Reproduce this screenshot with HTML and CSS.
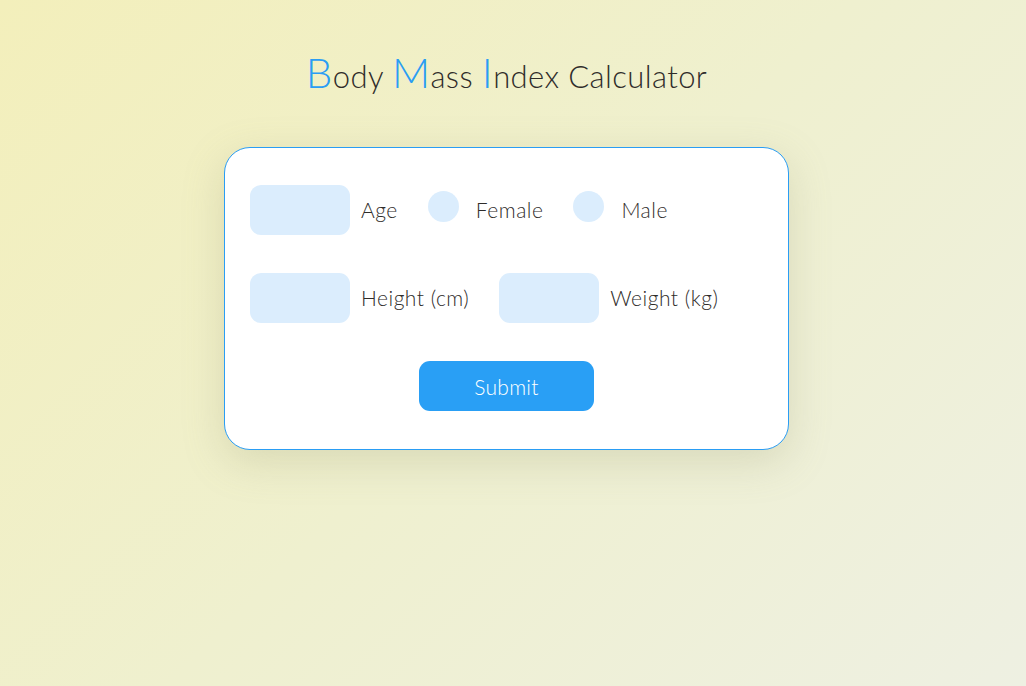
FILE: index.html
```html
<!DOCTYPE html>
<html lang="en">
<head>
<meta charset="utf-8">
<title>Body Mass Index Calculator</title>
<link rel="stylesheet" href="styles.css">
</head>
<body>
<main class="page">
  <h1 class="title"><span class="initial">B</span>ody <span class="initial">M</span>ass <span class="initial">I</span>ndex Calculator</h1>
  <form class="card">
    <div class="row">
      <label class="field">
        <input class="box" type="text">
        <span class="label">Age</span>
      </label>
      <label class="radio">
        <input class="dot" type="radio" name="gender">
        <span class="label">Female</span>
      </label>
      <label class="radio">
        <input class="dot" type="radio" name="gender">
        <span class="label">Male</span>
      </label>
    </div>
    <div class="row">
      <label class="field">
        <input class="box" type="text">
        <span class="label">Height (cm)</span>
      </label>
      <label class="field">
        <input class="box" type="text">
        <span class="label">Weight (kg)</span>
      </label>
    </div>
    <div class="actions">
      <button class="submit" type="button">Submit</button>
    </div>
  </form>
</main>
</body>
</html>
```

FILE: styles.css
```css
html, body {
  margin: 0;
  height: 100%;
}
body {
  background: linear-gradient(135deg, #f3efbb 0%, #eff0cf 50%, #eef0e2 100%);
  font-family: Lato, "Liberation Sans", sans-serif;
  font-weight: 300;
  color: #2f2c2a;
}
.page {
  display: flex;
  flex-direction: column;
  align-items: center;
  padding-top: 50px;
  padding-right: 13px;
}
.title {
  margin: 0;
  font-weight: 300;
  font-size: 31px;
  line-height: 44px;
  letter-spacing: 0.4px;
  color: #2f2c2a;
}
.initial {
  font-size: 42px;
  color: #2a9df4;
}
.card {
  margin-top: 49px;
  width: 513px;
  padding: 37px 25px 38px 25px;
  background: #fff;
  border: 1px solid #2a9df4;
  border-radius: 26px;
  box-shadow: 0 12px 40px rgba(150, 150, 110, 0.25);
  display: flex;
  flex-direction: column;
  gap: 38px;
}
.row {
  display: flex;
  align-items: center;
  height: 50px;
}
.field, .radio {
  display: flex;
  align-items: center;
}
.field + .field {
  margin-left: 30px;
}
.box {
  width: 100px;
  height: 50px;
  border: none;
  border-radius: 11px;
  background: #dbedfd;
  box-sizing: border-box;
  margin: 0 11px 0 0;
  outline: none;
}
.dot {
  appearance: none;
  -webkit-appearance: none;
  width: 31px;
  height: 31px;
  margin: 0 17px 0 0;
  border-radius: 50%;
  background: #dbedfd;
  position: relative;
  top: -4px;
}
.radio {
  margin-left: 30px;
}
.label {
  font-size: 21px;
  font-weight: 300;
  letter-spacing: 0.5px;
  color: #2f2c2a;
  position: relative;
  top: -1px;
}
.actions {
  display: flex;
  justify-content: center;
}
.submit {
  width: 175px;
  height: 50px;
  border: none;
  border-radius: 11px;
  background: #299ff5;
  color: #fff;
  font-family: inherit;
  font-weight: 300;
  font-size: 21px;
  letter-spacing: 0.3px;
}
```
